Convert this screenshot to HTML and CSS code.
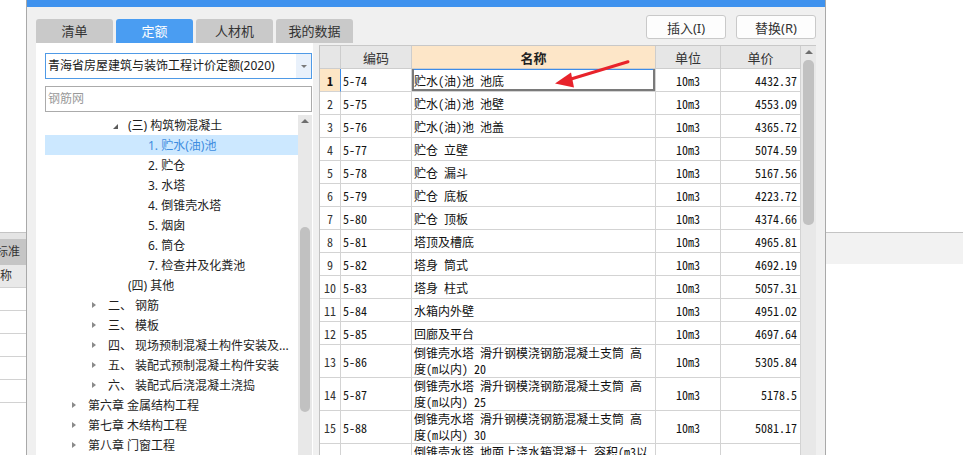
FILE: index.html
```html
<!DOCTYPE html>
<html lang="zh-CN">
<head>
<meta charset="utf-8">
<title>定额</title>
<link rel="stylesheet" href="styles.css">
</head>
<body>
<div class="backdrop">
  <div class="bd-left">
    <div class="bd-space"></div>
    <div class="bd-line"></div>
    <div class="bd-band"></div>
    <div class="bd-head">标准</div>
    <div class="bd-sub">称</div>
    <div class="bd-row"></div>
    <div class="bd-row"></div>
    <div class="bd-row"></div>
    <div class="bd-row"></div>
    <div class="bd-row"></div>
    <div class="bd-row end"></div>
  </div>
  <div class="bd-right">
    <div class="bd-space"></div>
    <div class="bd-line"></div>
    <div class="bd-rband"></div>
  </div>
</div>

<div class="dialog">
  <div class="titlebar"></div>
  <div class="toolbar">
    <div class="tabs">
      <div class="tab">清单</div>
      <div class="tab active">定额</div>
      <div class="tab">人材机</div>
      <div class="tab">我的数据</div>
    </div>
    <div class="actions">
      <button class="btn">插入(I)</button>
      <button class="btn">替换(R)</button>
    </div>
  </div>
  <div class="main">
    <div class="left-panel">
      <div class="select"><span class="select-text">青海省房屋建筑与装饰工程计价定额(2020)</span><span class="select-btn"><i class="caret"></i></span></div>
      <div class="search">钢筋网</div>
      <div class="tree-wrap">
        <div class="tree">
          <div class="node l2"><i class="tw open"></i><span>(三) 构筑物混凝土</span></div>
          <div class="node l3 sel"><i class="tw"></i><span>1. 贮水(油)池</span></div>
          <div class="node l3"><i class="tw"></i><span>2. 贮仓</span></div>
          <div class="node l3"><i class="tw"></i><span>3. 水塔</span></div>
          <div class="node l3"><i class="tw"></i><span>4. 倒锥壳水塔</span></div>
          <div class="node l3"><i class="tw"></i><span>5. 烟囱</span></div>
          <div class="node l3"><i class="tw"></i><span>6. 筒仓</span></div>
          <div class="node l3"><i class="tw"></i><span>7. 检查井及化粪池</span></div>
          <div class="node l2"><i class="tw"></i><span>(四) 其他</span></div>
          <div class="node l1"><i class="tw closed"></i><span>二、 钢筋</span></div>
          <div class="node l1"><i class="tw closed"></i><span>三、 模板</span></div>
          <div class="node l1"><i class="tw closed"></i><span>四、 现场预制混凝土构件安装及...</span></div>
          <div class="node l1"><i class="tw closed"></i><span>五、 装配式预制混凝土构件安装</span></div>
          <div class="node l1"><i class="tw closed"></i><span>六、 装配式后浇混凝土浇捣</span></div>
          <div class="node l0"><i class="tw closed"></i><span>第六章 金属结构工程</span></div>
          <div class="node l0"><i class="tw closed"></i><span>第七章 木结构工程</span></div>
          <div class="node l0"><i class="tw closed"></i><span>第八章 门窗工程</span></div>
        </div>
        <div class="vscroll tree-scroll">
          <div class="sc-up"><i class="up-arrow"></i></div>
          <div class="sc-thumb"></div>
        </div>
      </div>
    </div>

    <div class="grid-wrap">
      <table class="grid">
        <colgroup>
          <col class="c-no"><col class="c-code"><col class="c-name"><col class="c-unit"><col class="c-price">
        </colgroup>
        <thead>
          <tr><th></th><th>编码</th><th class="th-name">名称</th><th>单位</th><th>单价</th></tr>
        </thead>
        <tbody>
          <tr class="cur"><td class="no">1</td><td>5-74</td><td class="name">贮水(油)池 池底</td><td class="unit">10m3</td><td class="price">4432.37</td></tr>
          <tr><td class="no">2</td><td>5-75</td><td class="name">贮水(油)池 池壁</td><td class="unit">10m3</td><td class="price">4553.09</td></tr>
          <tr><td class="no">3</td><td>5-76</td><td class="name">贮水(油)池 池盖</td><td class="unit">10m3</td><td class="price">4365.72</td></tr>
          <tr><td class="no">4</td><td>5-77</td><td class="name">贮仓 立壁</td><td class="unit">10m3</td><td class="price">5074.59</td></tr>
          <tr><td class="no">5</td><td>5-78</td><td class="name">贮仓 漏斗</td><td class="unit">10m3</td><td class="price">5167.56</td></tr>
          <tr><td class="no">6</td><td>5-79</td><td class="name">贮仓 底板</td><td class="unit">10m3</td><td class="price">4223.72</td></tr>
          <tr><td class="no">7</td><td>5-80</td><td class="name">贮仓 顶板</td><td class="unit">10m3</td><td class="price">4374.66</td></tr>
          <tr><td class="no">8</td><td>5-81</td><td class="name">塔顶及槽底</td><td class="unit">10m3</td><td class="price">4965.81</td></tr>
          <tr><td class="no">9</td><td>5-82</td><td class="name">塔身 筒式</td><td class="unit">10m3</td><td class="price">4692.19</td></tr>
          <tr><td class="no">10</td><td>5-83</td><td class="name">塔身 柱式</td><td class="unit">10m3</td><td class="price">5057.31</td></tr>
          <tr><td class="no">11</td><td>5-84</td><td class="name">水箱内外壁</td><td class="unit">10m3</td><td class="price">4951.02</td></tr>
          <tr><td class="no">12</td><td>5-85</td><td class="name">回廊及平台</td><td class="unit">10m3</td><td class="price">4697.64</td></tr>
          <tr class="tall"><td class="no">13</td><td>5-86</td><td class="name">倒锥壳水塔 滑升钢模浇钢筋混凝土支筒 高<br>度(m以内) 20</td><td class="unit">10m3</td><td class="price">5305.84</td></tr>
          <tr class="tall"><td class="no">14</td><td>5-87</td><td class="name">倒锥壳水塔 滑升钢模浇钢筋混凝土支筒 高<br>度(m以内) 25</td><td class="unit">10m3</td><td class="price">5178.5</td></tr>
          <tr class="tall"><td class="no">15</td><td>5-88</td><td class="name">倒锥壳水塔 滑升钢模浇钢筋混凝土支筒 高<br>度(m以内) 30</td><td class="unit">10m3</td><td class="price">5081.17</td></tr>
          <tr class="tall"><td class="no"></td><td></td><td class="name">倒锥壳水塔 地面上浇水箱混凝土 容积(m3以</td><td class="unit"></td><td class="price"></td></tr>
        </tbody>
      </table>
      <div class="vscroll grid-scroll">
        <div class="sc-up"><i class="up-arrow"></i></div>
        <div class="sc-thumb"></div>
      </div>
    </div>
  </div>
</div>

<svg class="annot" width="90" height="40" viewBox="0 0 90 40">
  <line x1="83" y1="6.7" x2="26" y2="24" stroke="#e8232b" stroke-width="3" stroke-linecap="round"/>
  <polygon points="10,28.4 26,17.5 29,32.5" fill="#e8232b"/>
</svg>
</body>
</html>
```

FILE: styles.css
```css
* { box-sizing: border-box; }
html, body { margin: 0; padding: 0; }
body {
  width: 963px;
  height: 455px;
  overflow: hidden;
  position: relative;
  background: #fff;
  font-family: "Noto Sans", "Noto Sans CJK SC", sans-serif;
  font-size: 12px;
  color: #1e1e1e;
}

/* background window */
.backdrop { display: flex; justify-content: space-between; height: 455px; }
.bd-left { width: 26px; display: flex; flex-direction: column; overflow: hidden; }
.bd-right { width: 137px; display: flex; flex-direction: column; }
.bd-space { height: 232px; flex: none; }
.bd-line { height: 1px; background: #c4c4c4; flex: none; }
.bd-band { height: 6px; background: #e4e4e4; flex: none; }
.bd-head { height: 26px; flex: none; background: #c5c5c5; line-height: 26px; white-space: nowrap; text-indent: -4px; color: #333; }
.bd-sub { height: 22px; flex: none; background: #e9e9e9; line-height: 22px; color: #333; }
.bd-row { height: 23px; flex: none; border-top: 1px solid #d2d2d2; }
.bd-row.end { flex: 1; }
.bd-rband { height: 31px; background: #f2f2f2; flex: none; }

/* dialog */
.dialog {
  position: absolute;
  left: 26px;
  top: 0;
  width: 800px;
  height: 455px;
  background: #f0f0f0;
  border-left: 1px solid #a9a9a9;
  border-right: 1px solid #a9a9a9;
  display: flex;
  flex-direction: column;
}
.titlebar { height: 7px; flex: none; background: #3f92ee; }
.toolbar { height: 36px; flex: none; display: flex; align-items: flex-end; padding: 0 9px; }
.tabs { display: flex; gap: 3px; }
.tab {
  width: 77px; height: 24px;
  background: #c9c9c9;
  border-radius: 3px 3px 0 0;
  text-align: center;
  line-height: 24px;
  font-size: 13px;
  color: #333;
}
.tab.active { background: #4a9df2; color: #fff; }
.actions { margin-left: auto; align-self: flex-start; margin-top: 8px; display: flex; gap: 10px; }
.btn {
  width: 80px; height: 24px;
  background: #fdfdfd;
  border: 1px solid #c9c9c9;
  border-radius: 3px;
  font: 13px "Noto Sans", "Noto Sans CJK SC", sans-serif;
  color: #333;
  padding: 0;
}

.main { flex: 1; min-height: 0; display: flex; gap: 6px; padding-left: 9px; }

/* left panel */
.left-panel { width: 277px; flex: none; background: #fff; padding: 10px 1px 0 9px; display: flex; flex-direction: column; }
.select { height: 26px; flex: none; border: 1px solid #4f9ae6; display: flex; }
.select-text { flex: 1; padding-left: 2px; line-height: 24px; white-space: nowrap; overflow: hidden; color: #1a1a1a; }
.select-btn { width: 15px; background: #e9f1fb; display: flex; align-items: center; justify-content: center; }
.caret { display: block; width: 0; height: 0; border-top: 3px solid #7a7a7a; border-left: 3px solid transparent; border-right: 3px solid transparent; }
.search { height: 26px; flex: none; margin-top: 7px; border: 1px solid #ababab; color: #9a9a9a; line-height: 24px; padding-left: 2px; }

.tree-wrap { flex: 1; min-height: 0; margin-top: 3px; display: flex; }
.tree { flex: 1; min-width: 0; overflow: hidden; }
.node { height: 20px; display: flex; align-items: center; white-space: nowrap; color: #1e1e1e; }
.node.l0 { padding-left: 27px; }
.node.l1 { padding-left: 47px; }
.node.l2 { padding-left: 67px; }
.node.l3 { padding-left: 87px; }
.node.sel { background: #cce8ff; color: #3f8de0; }
.tw { display: flex; width: 16px; height: 20px; flex: none; align-items: center; }
.tw.closed::before {
  content: ""; width: 0; height: 0;
  border-left: 4px solid #8a8a8a;
  border-top: 3.5px solid transparent;
  border-bottom: 3.5px solid transparent;
}
.tw.open::before {
  content: ""; width: 0; height: 0; margin-top: 2px; margin-left: 1px;
  border-bottom: 5px solid #5a5a5a;
  border-left: 5px solid transparent;
}

/* scrollbars */
.vscroll { flex: none; background: #e8e8e8; }
.tree-scroll { width: 14px; }
.grid-scroll { width: 15px; }
.sc-up { height: 12px; display: flex; justify-content: center; align-items: center; }
.up-arrow { display: block; width: 0; height: 0; border-bottom: 4px solid #6e6e6e; border-left: 4px solid transparent; border-right: 4px solid transparent; }
.sc-thumb { background: #c1c1c1; border-radius: 5px; margin: 0 2px; }
.tree-scroll .sc-thumb { margin-top: 100px; height: 185px; }
.grid-scroll .sc-thumb { margin-top: 2px; height: 165px; }

/* grid */
.grid-wrap {
  width: 497px; flex: none;
  margin-top: 2px;
  border-left: 1px solid #c2c2c2;
  border-top: 1px solid #c8c8c8;
  display: flex;
  overflow: hidden;
  background: #fff;
}
.grid {
  table-layout: fixed;
  width: 481px;
  flex: none;
  align-self: flex-start;
  border-collapse: separate;
  border-spacing: 0;
  font-family: "Noto Sans Mono CJK SC", "Liberation Mono", "Noto Sans CJK SC", monospace;
  font-size: 12px;
  color: #111;
}
.c-no { width: 21px; }
.c-code { width: 71px; }
.c-name { width: 244px; }
.c-unit { width: 65px; }
.c-price { width: 80px; }
.grid th, .grid td {
  height: 23px;
  padding: 0 0 0 2px;
  border-right: 1px solid #d3d3d3;
  border-bottom: 1px solid #d3d3d3;
  white-space: nowrap;
  overflow: hidden;
  text-align: left;
  vertical-align: middle;
}
.grid th {
  background: #e6e6e6;
  font-family: "Noto Sans", "Noto Sans CJK SC", sans-serif;
  font-size: 13px;
  font-weight: normal;
  color: #333;
  text-align: center;
  padding: 0;
  border-color: #cdcdcd;
}
.grid th.th-name { background: #fde6c8; font-weight: bold; color: #222; }
.grid td.no { text-align: center; padding: 0; color: #333; }
.grid td.unit { text-align: center; padding: 0; }
.grid td.price { text-align: right; padding: 0 3px 0 0; }
.grid tr.tall td { height: 33px; }
.grid tr.tall td.name { line-height: 16px; vertical-align: top; padding-top: 0; }
.grid tr.cur td.no { background: #fde6c6; font-weight: bold; border-right-color: #3d8ce8; color: #111; }
.grid tr.cur td.name { box-shadow: inset 2px 0 #7a7a7a, inset -2px 0 #7a7a7a, inset 0 -2px #7a7a7a, inset 0 1px #3d8ce8; }

.annot { position: absolute; left: 545px; top: 55px; }
```
